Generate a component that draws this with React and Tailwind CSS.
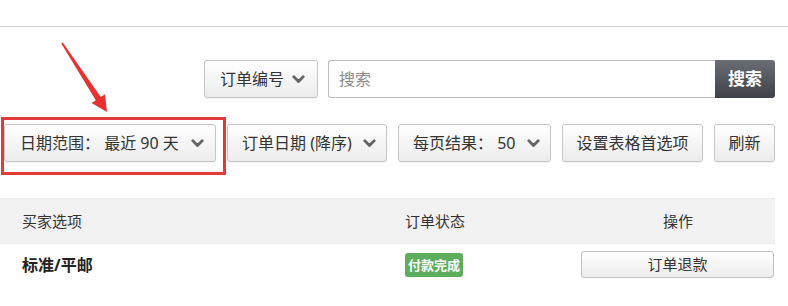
import React from "react";

const Chevron = () => (
  <svg width="13" height="9" viewBox="0 0 13 9" className="shrink-0">
    <polyline points="1.8,1.8 6.5,6.6 11.2,1.8" fill="none" stroke="#646464" strokeWidth="2.8" strokeLinecap="round" strokeLinejoin="round" />
  </svg>
);

const btn =
  "flex items-center h-[38px] rounded-[3px] border border-[#c6c6c6] bg-gradient-to-b from-[#ffffff] to-[#ececec] text-[#333] text-[16px] shadow-[0_1px_1px_rgba(0,0,0,0.06)]";

export default function App() {
  return (
    <div
      className="relative w-[788px] h-[306px] bg-white overflow-hidden"
      style={{ fontFamily: '"Noto Sans", "Noto Sans CJK SC", sans-serif' }}
    >
      <div className="h-[26px]" />
      <div className="border-t border-[#cfcfcf]" />

      {/* row 1 */}
      <div className="mt-[33px] flex justify-end pr-[13px]">
        <div className={`${btn} w-[114px] pl-[15px] gap-[8px]`}>
          <span>订单编号</span>
          <Chevron />
        </div>
        <div className="ml-[10px] flex h-[38px]">
          <div className="w-[387px] h-full border border-[#bdbdbd] border-r-0 rounded-l-[3px] flex items-center pl-[10px] text-[16px] text-[#8a8a8a]">
            搜索
          </div>
          <div className="w-[60px] h-full rounded-r-[3px] bg-gradient-to-b from-[#6a6e74] to-[#3f4349] flex items-center justify-center text-white text-[17px] font-bold">
            搜索
          </div>
        </div>
      </div>

      {/* row 2 */}
      <div className="mt-[26px] flex gap-[11px] pl-[4px]">
        <div className={`${btn} w-[212px] pl-[15px] justify-between pr-[11px]`}>
          <span>日期范围： 最近 90 天</span>
          <Chevron />
        </div>
        <div className={`${btn} w-[160px] pl-[14px] justify-between pr-[10px]`}>
          <span>订单日期 (降序)</span>
          <Chevron />
        </div>
        <div className={`${btn} w-[153px] pl-[14px] justify-between pr-[10px]`}>
          <span>每页结果： 50</span>
          <Chevron />
        </div>
        <div className={`${btn} w-[141px] justify-center`}>
          <span>设置表格首选项</span>
        </div>
        <div className={`${btn} w-[61px] justify-center`}>
          <span>刷新</span>
        </div>
      </div>

      {/* table header */}
      <div className="mt-[36px] w-[775px] h-[46px] bg-[#f2f2f2] border-t border-[#ececec] border-b border-[#dcdcdc] flex items-center text-[15px] text-[#333]">
        <div className="w-[405px] pl-[22px]">买家选项</div>
        <div className="w-[176px]">订单状态</div>
        <div className="w-[194px] text-center">操作</div>
      </div>

      {/* row */}
      <div className="w-[775px] flex items-center pt-[7px]">
        <div className="w-[405px] pl-[22px] text-[16px] font-bold text-[#222]">标准/平邮</div>
        <div className="w-[176px]">
          <span className="inline-flex items-center justify-center w-[58px] h-[24px] rounded-[3px] bg-[#5cae5c] text-white text-[13px] font-bold">
            付款完成
          </span>
        </div>
        <div className="w-[194px] flex">
          <div className="w-[193px] h-[27px] rounded-[3px] border border-[#c0c0c0] bg-gradient-to-b from-[#ffffff] to-[#ececec] flex items-center justify-center text-[15px] text-[#333]">
            订单退款
          </div>
        </div>
      </div>

      {/* red highlight box */}
      <div className="absolute left-[1px] top-[117px] w-[225px] h-[58px] border-[3px] border-[#e2393c]" />

      {/* arrow */}
      <svg className="absolute left-0 top-0" width="140" height="130" viewBox="0 0 140 130">
        <polygon
          points="61.3,43.4 62.7,42.6 100.8,97 105,94.2 107,112 91.6,103 95.8,100.2"
          fill="#e7302f"
        />
      </svg>
    </div>
  );
}
